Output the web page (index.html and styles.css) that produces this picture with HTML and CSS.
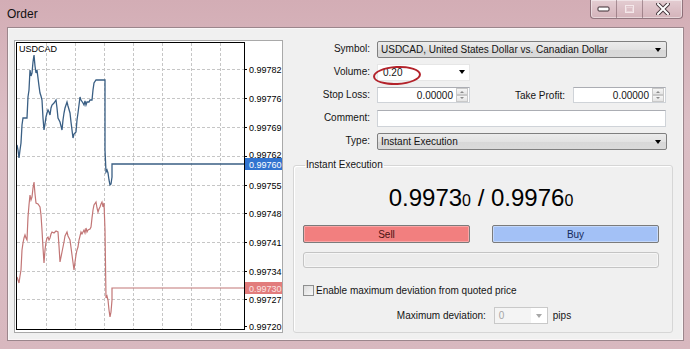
FILE: index.html
```html
<!DOCTYPE html>
<html lang="en">
  <head>
    <meta charset="UTF-8" />
    <meta name="viewport" content="width=device-width, initial-scale=1.0" />
    <title>Order</title>
    <link rel="stylesheet" href="styles.css">
  </head>
  <body>
    <div class="window">
      <div class="title-bar">
        <span class="title">Order</span>
        <div class="caption-buttons">
          <span class="cap-btn cap-min">
            <svg width="13" height="6" viewBox="0 0 13 6"><rect x="1" y="1" width="11" height="4" rx="1" fill="#fff" stroke="#3a2a30" stroke-width="1"/></svg>
          </span>
          <span class="cap-btn cap-max">
            <svg width="11" height="10" viewBox="0 0 11 10"><rect x="1.5" y="1.5" width="8" height="7" fill="none" stroke="#f4e8ea" stroke-width="1"/><rect x="2.5" y="3.5" width="6" height="4" fill="none" stroke="#e8d2d7" stroke-width="1"/></svg>
          </span>
          <span class="cap-btn cap-close">
            <svg width="14" height="12" viewBox="0 0 14 12"><path d="M2 1 L12 11 M12 1 L2 11" stroke="#4a3a40" stroke-width="4" stroke-linecap="square"/><path d="M2 1 L12 11 M12 1 L2 11" stroke="#fff" stroke-width="2" stroke-linecap="square"/></svg>
          </span>
        </div>
      </div>

      <div class="client">
        <div class="chart-panel">
          <svg class="chart" width="267" height="291" viewBox="15 41 267 291">
            <g class="grid">
              <line x1="46.5" y1="43" x2="46.5" y2="329"/>
              <line x1="75.5" y1="43" x2="75.5" y2="329"/>
              <line x1="104.5" y1="43" x2="104.5" y2="329"/>
              <line x1="133.5" y1="43" x2="133.5" y2="329"/>
              <line x1="162.5" y1="43" x2="162.5" y2="329"/>
              <line x1="191.5" y1="43" x2="191.5" y2="329"/>
              <line x1="220.5" y1="43" x2="220.5" y2="329"/>
              <line x1="17" y1="69.5" x2="244" y2="69.5"/>
              <line x1="17" y1="98.5" x2="244" y2="98.5"/>
              <line x1="17" y1="127.5" x2="244" y2="127.5"/>
              <line x1="17" y1="156.5" x2="244" y2="156.5"/>
              <line x1="17" y1="185.5" x2="244" y2="185.5"/>
              <line x1="17" y1="213.5" x2="244" y2="213.5"/>
              <line x1="17" y1="242.5" x2="244" y2="242.5"/>
              <line x1="17" y1="271.5" x2="244" y2="271.5"/>
              <line x1="17" y1="299.5" x2="244" y2="299.5"/>
            </g>
            <polyline class="ask" points="17,145 18,150 19,158 20,150 21,143 22,125 23,118 27,118 28,97 29,90 30,70 31,76 32,73 33,62 34,55 35,66 36,73 37,70 38,78 39,86 40,93 41,96 42,100 43,118 44,130 45,124 46,117 47,113 48,110 49,112 50,115 51,108 52,105 54,103 56,100 57,108 58,118 60,122 62,130 63,120 64,113 65,108 67,102 68,106 70,113 71,122 73,138 74,134 76,132 77,120 78,113 79,105 80,97 81,100 83,103 84,105 85,101 86,105 87,102 89,102 90,100 92,100 93,90 94,83 96,80 105,80 105,150 106,172 107,170 108,173 109,180 110,185 111,184 112,177 112,164 244,164"/>
            <polyline class="bid" points="17,277 18,280 19,283 20,276 21,270 22,250 23,243 24,238 25,235 26,238 27,240 28,217 29,205 30,195 31,200 32,197 33,188 34,182 35,194 36,203 38,204 40,207 41,215 42,230 43,248 44,263 45,250 46,242 47,238 48,237 49,240 50,238 51,234 52,232 54,233 56,231 58,232 59,246 60,262 62,252 64,242 65,236 67,232 68,236 70,240 72,255 74,270 75,262 76,255 77,250 78,247 79,240 81,232 82,234 84,230 85,233 86,228 87,232 88,230 90,229 91,227 92,218 93,210 94,205 96,202 97,208 98,212 99,209 100,207 101,204 102,202 103,207 104,203 105,230 106,298 107,296 108,300 109,310 110,317 111,312 112,300 112,288 244,288"/>
            <rect class="plot-frame" x="16.5" y="42.5" width="228" height="287"/>
            <text class="symbol-label" x="19" y="52">USDCAD</text>
            <g class="ticks">
              <line x1="244" y1="69.5" x2="247" y2="69.5"/>
              <line x1="244" y1="98.5" x2="247" y2="98.5"/>
              <line x1="244" y1="127.5" x2="247" y2="127.5"/>
              <line x1="244" y1="156.5" x2="247" y2="156.5"/>
              <line x1="244" y1="185.5" x2="247" y2="185.5"/>
              <line x1="244" y1="213.5" x2="247" y2="213.5"/>
              <line x1="244" y1="242.5" x2="247" y2="242.5"/>
              <line x1="244" y1="271.5" x2="247" y2="271.5"/>
              <line x1="244" y1="299.5" x2="247" y2="299.5"/>
              <line x1="244" y1="326.5" x2="247" y2="326.5"/>
            </g>
            <g class="price-scale">
              <text x="249" y="72.5">0.99782</text>
              <text x="249" y="101.5">0.99776</text>
              <text x="249" y="130.5">0.99769</text>
              <text x="249" y="158">0.99762</text>
              <text x="249" y="188.5">0.99755</text>
              <text x="249" y="216.5">0.99748</text>
              <text x="249" y="245.5">0.99741</text>
              <text x="249" y="274.5">0.99734</text>
              <text x="249" y="302.5">0.99727</text>
              <text x="249" y="329.5">0.99720</text>
            </g>
            <rect class="ask-tag" x="245" y="158" width="37" height="12"/>
            <text class="tag-text" x="249" y="167.5">0.99760</text>
            <rect class="bid-tag" x="245" y="282" width="37" height="12"/>
            <text class="tag-text bid-text" x="249" y="291.5">0.99730</text>
          </svg>
        </div>

        <div class="order-panel">
          <div class="form-grid">
            <label>Symbol:</label>
            <div class="combo">USDCAD, United States Dollar vs. Canadian Dollar<span class="arrow"></span></div>

            <label>Volume:</label>
            <div class="field-row">
              <div class="volume-box">0.20<span class="arrow"></span><span class="circle-mark"></span></div>
            </div>

            <label>Stop Loss:</label>
            <div class="field-row">
              <div class="spin-box"><span class="spin-value">0.00000</span><span class="spinner"><i></i><i class="down"></i></span></div>
              <label class="tp-label">Take Profit:</label>
              <div class="spin-box"><span class="spin-value">0.00000</span><span class="spinner"><i></i><i class="down"></i></span></div>
            </div>

            <label>Comment:</label>
            <div class="text-box"></div>

            <label>Type:</label>
            <div class="combo">Instant Execution<span class="arrow"></span></div>
          </div>

          <fieldset class="exec-group">
            <legend>Instant Execution</legend>
            <div class="quote">0.9973<small>0</small> / 0.9976<small>0</small></div>
            <div class="trade-buttons">
              <button class="sell">Sell</button>
              <button class="buy">Buy</button>
            </div>
            <div class="status-bar"></div>
            <label class="check-row"><span class="checkbox"></span>Enable maximum deviation from quoted price</label>
            <div class="deviation-row">
              <span>Maximum deviation:</span>
              <div class="dev-combo"><span class="dev-value">0</span><span class="arrow"></span></div>
              <span>pips</span>
            </div>
          </fieldset>
        </div>
      </div>
    </div>
  </body>
</html>
```

FILE: styles.css
```css
:root {
  --frame: #d9b9c0;
  --client-bg: #f0f0f0;
  --field-border: #cfd3d8;
  --text: #141414;
}

body {
  margin: 0;
  width: 690px;
  height: 349px;
  overflow: hidden;
  background: linear-gradient(180deg, #d3adb5 0%, #dcbec5 35%, #d8b8bf 100%);
  font-family: "Liberation Sans", Arial, sans-serif;
  font-size: 10px;
  color: var(--text);
}

.window {
  height: 349px;
  display: flex;
  flex-direction: column;
}

/* title bar */
.title-bar {
  height: 28px;
  flex-shrink: 0;
  display: flex;
  align-items: flex-start;
}

.title {
  font-size: 12px;
  margin: 7px 0 0 7px;
  color: #111;
}

.caption-buttons {
  margin-left: auto;
  margin-right: 7px;
  height: 18px;
  display: flex;
  border: 1px solid rgba(80, 50, 60, 0.55);
  border-top: none;
  border-radius: 0 0 4px 4px;
  background: linear-gradient(180deg, #e4cdd2, #d4b3ba);
  box-shadow: inset 0 0 0 1px rgba(255, 255, 255, 0.45);
}

.cap-btn {
  display: flex;
  align-items: center;
  justify-content: center;
  border-right: 1px solid rgba(80, 50, 60, 0.4);
}

.cap-min,
.cap-max {
  width: 25px;
}

.cap-close {
  width: 39px;
  border-right: none;
}

/* client area */
.client {
  margin-left: 8px;
  width: 675px;
  height: 312px;
  box-sizing: border-box;
  border: 1px solid #faf6f7;
  box-shadow: 0 0 0 1px #9b868c;
  background: var(--client-bg);
  display: flex;
  align-items: flex-start;
  padding: 11px 0 0 5px;
}

.chart-panel {
  width: 269px;
  height: 293px;
  box-sizing: border-box;
  border: 1px solid #a9a9a9;
  background: #fff;
  flex-shrink: 0;
}

.chart {
  display: block;
}

.grid line {
  stroke: #c6c6c6;
  stroke-width: 1;
  stroke-dasharray: 3 2;
}

.ticks line {
  stroke: #000;
  stroke-width: 1;
}

.plot-frame {
  fill: none;
  stroke: #000;
  stroke-width: 1;
}

.ask {
  fill: none;
  stroke: #3a5f84;
  stroke-width: 1.3;
}

.bid {
  fill: none;
  stroke: #c27676;
  stroke-width: 1.2;
}

.chart text {
  font-family: "Liberation Sans", Arial, sans-serif;
  font-size: 9px;
  fill: #000;
}

.ask-tag {
  fill: #3274d0;
}

.bid-tag {
  fill: #e27c7c;
}

.chart .tag-text {
  fill: #fff;
}

.chart .bid-text {
  fill: #fbe4e4;
}

/* order form */
.order-panel {
  margin-left: 10px;
  width: 380px;
}

.form-grid {
  display: grid;
  grid-template-columns: 77px 1fr;
  grid-auto-rows: 16px;
  column-gap: 7px;
  row-gap: 7px;
  margin: 1px 6px 0 0;
}

.form-grid > label {
  text-align: right;
  line-height: 16px;
}

.combo {
  box-sizing: border-box;
  height: 17px;
  border: 1px solid #7f7f7f;
  border-radius: 2px;
  background: linear-gradient(180deg, #ececec 0%, #e2e2e2 50%, #d7d7d7 51%, #dadada 100%);
  display: flex;
  align-items: center;
  padding-left: 3px;
  white-space: nowrap;
}

.arrow {
  margin-left: auto;
  margin-right: 5px;
  width: 0;
  height: 0;
  border-left: 3.5px solid transparent;
  border-right: 3.5px solid transparent;
  border-top: 4px solid #000;
}

.field-row {
  display: flex;
  align-items: center;
  padding-right: 1px;
}

.volume-box {
  position: relative;
  box-sizing: border-box;
  width: 93px;
  height: 17px;
  border: 1px solid #e6e6e6;
  background: #fff;
  display: flex;
  align-items: center;
  padding-left: 5px;
}

.volume-box .arrow {
  margin-right: 4px;
}

/* hand-drawn annotation around the volume */
.circle-mark {
  position: absolute;
  left: -5px;
  top: 1px;
  width: 44px;
  height: 15px;
  border: 2px solid #b3222a;
  border-radius: 50%;
  transform: rotate(-3deg);
}

.spin-box {
  box-sizing: border-box;
  width: 93px;
  height: 16px;
  border: 1px solid var(--field-border);
  border-top-color: #abadb3;
  background: #fff;
  display: flex;
  align-items: center;
}

.spin-value {
  flex: 1;
  text-align: right;
  padding-right: 3px;
}

.spinner {
  width: 12px;
  height: 14px;
  display: flex;
  flex-direction: column;
  margin-right: 1px;
}

.spinner i {
  flex: 1;
  border: 1px solid #c9c9c9;
  background: linear-gradient(#f6f6f6, #e4e4e4);
  position: relative;
}

.spinner i::after {
  content: "";
  position: absolute;
  left: 3px;
  top: 2px;
  border-left: 2.5px solid transparent;
  border-right: 2.5px solid transparent;
  border-bottom: 2.5px solid #8a8a8a;
}

.spinner i.down::after {
  top: 1px;
  border-bottom: none;
  border-top: 2.5px solid #8a8a8a;
}

.tp-label {
  margin-left: auto;
  margin-right: 8px;
}

.text-box {
  box-sizing: border-box;
  height: 17px;
  margin-right: 1px;
  border: 1px solid var(--field-border);
  border-top-color: #abadb3;
  background: #fff;
}

/* execution group */
.exec-group {
  margin: 10px 0 0 0;
  padding: 0 13px 8px 9px;
  border: 1px solid #d6d6d6;
  border-radius: 3px;
  box-shadow: inset 1px 1px 0 #fff;
  min-width: 0;
}

.exec-group legend {
  padding: 0 1px;
  margin-left: 2px;
  line-height: 12px;
}

.quote {
  text-align: center;
  font-size: 24px;
  line-height: 28px;
  margin-top: 13px;
  color: #000;
}

.quote small {
  font-size: 16px;
}

.trade-buttons {
  display: flex;
  gap: 22px;
  margin-top: 10px;
}

.trade-buttons button {
  flex: 1;
  height: 18px;
  padding: 0;
  font-family: inherit;
  font-size: 10px;
  border: 1px solid #7b7b7b;
  border-radius: 2px;
}

.sell {
  background: #f27f7f;
  color: #4a1212;
  box-shadow: inset 0 0 0 1px #f9a6a6;
}

.buy {
  background: #a3c1f6;
  color: #142a5c;
  box-shadow: inset 0 0 0 1px #c4d8fa;
}

.status-bar {
  height: 16px;
  box-sizing: border-box;
  margin-top: 9px;
  border: 1px solid #c4c4c4;
  border-radius: 3px;
  background: #ececec;
  box-shadow: inset 0 0 0 1px #f6f6f6;
}

.check-row {
  display: flex;
  align-items: center;
  margin-top: 16px;
  height: 12px;
}

.checkbox {
  box-sizing: border-box;
  width: 11px;
  height: 11px;
  margin-right: 2px;
  border: 1px solid #8e8f8f;
  background: linear-gradient(135deg, #dcdcdc, #f8f8f8);
}

.deviation-row {
  display: flex;
  align-items: center;
  justify-content: center;
  gap: 8px;
  margin-top: 11px;
  padding-left: 6px;
}

.dev-combo {
  box-sizing: border-box;
  width: 54px;
  height: 17px;
  border: 1px solid #c9c9c9;
  background: #fff;
  display: flex;
  align-items: center;
  margin-right: -3px;
}

.dev-value {
  width: 36px;
  height: 100%;
  box-sizing: border-box;
  padding-left: 4px;
  line-height: 15px;
  color: #a6a6a6;
  background: #f4f4f4;
}

.dev-combo .arrow {
  border-top-color: #a8a8a8;
  margin-right: 5px;
}
```
